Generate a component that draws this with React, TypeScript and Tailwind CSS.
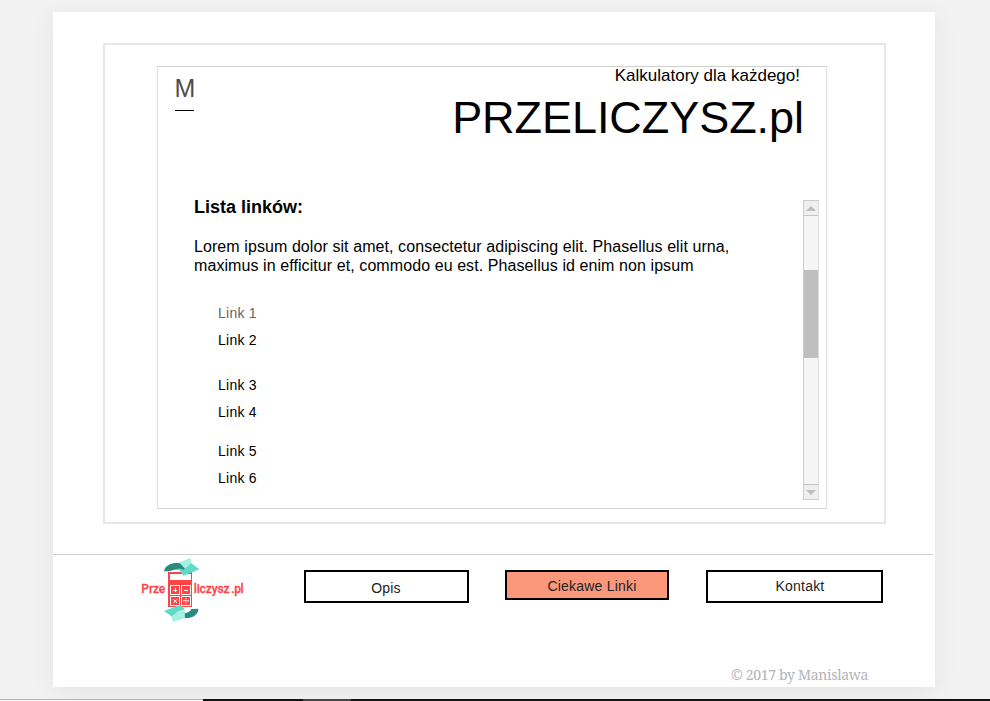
import React from "react";

const linkPairs = [
  { names: ["Link 1", "Link 2"], gap: "mt-[29px]" },
  { names: ["Link 3", "Link 4"], gap: "mt-[18px]" },
  { names: ["Link 5", "Link 6"], gap: "mt-[12px]" },
];

function Logo() {
  return (
    <svg className="h-[70px] w-[130px] shrink-0" viewBox="0 33 390 210">
      <path fill="#fd4447" fillRule="evenodd" d="M114 81H186V186H114ZM120 87H183V105H120Z" />
      <g fill="none" stroke="#fff" strokeWidth="3">
        <path d="M121.500 121.500H148.500V148.500H121.500ZM154.500 121.500H181.500V148.500H154.500ZM121.500 154.500H148.500V181.500H121.500ZM154.500 154.500H181.500V181.500H154.500Z" />
        <path d="M129 136.500H141M136.500 129V141M162 136.500H174M130 163L141 174M141 163L130 174M159 167.500H177M166 161.500H170M166 174.500H170" />
      </g>
      <path fill="#298b80" d="M102 79C105 59 128 52 147 54L170 60L162 80C145 68 123 75 120 79Z" />
      <path fill="#a6f0e0" d="M147 52L182 39L186 66L166 72Z" />
      <path fill="#5ddbc8" d="M144 70L162 74L184 55L208 73L160 92Z" />
      <path fill="#298b80" d="M144 205C160 207 178 205 184 192L205 191C206 210 184 221 163 219L142 213Z" />
      <path fill="#5ddbc8" d="M102 198L151 179L165 193L145 199L126 215Z" />
      <path fill="#a6f0e0" d="M145 199L164 194L165 218L129 231L124 216Z" />
      <g
        fill="#fd4447"
        stroke="#fd4447"
        strokeWidth="0.8"
        fontFamily="Roboto, 'Liberation Sans', sans-serif"
        fontWeight="500"
        fontSize="36"
      >
        <text x="34" y="144" textLength="72" lengthAdjust="spacing">Prze</text>
        <text x="191" y="143" textLength="108" lengthAdjust="spacing">liczysz</text>
        <text x="304" y="143" textLength="37" lengthAdjust="spacing">.pl</text>
      </g>
    </svg>
  );
}

function Scrollbar() {
  return (
    <div className="flex h-[300px] w-4 shrink-0 flex-col border border-[#cdcdcd] border-r-[#dedede] bg-[#f5f5f5]">
      <div className="flex h-[15px] items-center justify-center border-b border-[#c4c4c4] bg-[#efefef]">
        <svg className="h-[5px] w-[10px]" viewBox="0 0 10 5">
          <path d="M0 5L5 0L10 5Z" fill="#bdbdbd" />
        </svg>
      </div>
      <div className="mt-[54px] h-[88px] bg-[#bfbfbf]" />
      <div className="mt-auto flex h-[15px] items-center justify-center border-t border-[#c4c4c4] bg-[#efefef]">
        <svg className="h-[5px] w-[10px]" viewBox="0 0 10 5">
          <path d="M0 0L5 5L10 0Z" fill="#bdbdbd" />
        </svg>
      </div>
    </div>
  );
}

export default function App() {
  return (
    <div className="flex h-[701px] w-[990px] flex-col overflow-hidden bg-[#f2f2f2] pt-3 font-['Liberation_Sans',Arial,sans-serif] text-black">
      <div className="ml-[53px] flex h-[675px] w-[882px] shrink-0 flex-col bg-white shadow-[0_5px_25px_rgba(0,0,0,0.06)]">
        <main className="ml-[50px] mt-[31px] h-[481px] w-[783px] shrink-0 border-2 border-[#e7e7e7] pl-[52px] pt-[21px]">
          <section className="flex h-[443px] w-[670px] flex-col border border-[#d2d2d2] border-x-[#dedede]">
            <header className="flex h-[133px] shrink-0 justify-between pl-[17px] pr-[22px]">
              <div className="w-5 pt-[7px]">
                <div className="ml-[-0.5px] text-[25px] leading-7 text-[#4d4d4d]">M</div>
                <div className="mt-2 h-px w-[19px] bg-black" />
              </div>
              <div className="flex flex-col items-end whitespace-nowrap">
                <p className="mr-1 text-[17px] leading-[18px]">Kalkulatory dla każdego!</p>
                <h1 className="mt-[7px] text-[45px] leading-[52px] tracking-[-0.05px]">PRZELICZYSZ.pl</h1>
              </div>
            </header>
            <div className="flex justify-between pl-9 pr-[7px]">
              <div className="whitespace-nowrap">
                <h2 className="mt-[-3px] text-[18px] font-bold leading-5">Lista linków:</h2>
                <p className="mt-5 text-base leading-[19px] tracking-[0.08px]">
                  Lorem ipsum dolor sit amet, consectetur adipiscing elit. Phasellus elit urna,
                  <br />
                  maximus in efficitur et, commodo eu est. Phasellus id enim non ipsum
                </p>
                <nav className="ml-6 flex flex-col tracking-[0.25px]">
                  {linkPairs.map((pair) => (
                    <div key={pair.names[0]} className={`flex flex-col ${pair.gap}`}>
                      {pair.names.map((name) => (
                        <a
                          key={name}
                          className={`h-[27px] text-sm leading-[18px] ${name === "Link 1" ? "text-[#666]" : ""}`}
                        >
                          {name}
                        </a>
                      ))}
                    </div>
                  ))}
                </nav>
              </div>
              <Scrollbar />
            </div>
          </section>
        </main>
        <footer className="mt-[30px] flex h-[133px] w-[880px] flex-col border-t border-[#cecece]">
          <div className="flex h-[72px] shrink-0 items-start pl-[77px] pt-px text-sm tracking-[0.2px] text-[#222]">
            <Logo />
            <a className="ml-[44px] mt-[14px] flex h-[33px] w-[165px] items-center justify-center border-2 border-black pr-px pt-[3px]">Opis</a>
            <a className="ml-[36px] mt-[14px] flex h-[30px] w-[164px] items-center justify-center border-2 border-black bg-[#fb987b] pl-[10px] pt-px">Ciekawe Linki</a>
            <a className="ml-[37px] mt-[14px] flex h-[33px] w-[177px] items-center justify-center border-2 border-black pb-[2px] pl-[11px]">Kontakt</a>
          </div>
          <p className="ml-[678px] mt-[38px] whitespace-nowrap font-['Noto_Serif','Liberation_Serif',serif] text-[14px] leading-5 tracking-[-0.33px] text-[#b3b3ba]">
            © 2017 by Manislawa
          </p>
        </footer>
      </div>
      <div className="mt-auto flex h-[2px] shrink-0">
        <div className="w-[203px] border-t border-[#b5b5b5] bg-[#f5f5f5]" />
        <div className="w-[100px] bg-[#111113]" />
        <div className="w-12 bg-[#454545]" />
        <div className="grow bg-[#111113]" />
      </div>
    </div>
  );
}
